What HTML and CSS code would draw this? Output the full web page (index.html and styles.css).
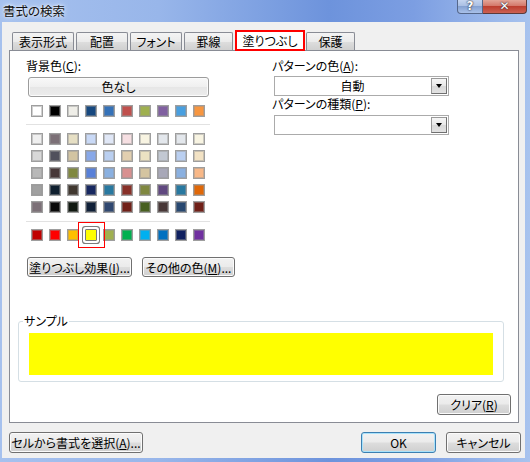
FILE: index.html
```html
<!DOCTYPE html>
<html lang="ja">
<head>
<meta charset="utf-8">
<title>書式の検索</title>
<link rel="stylesheet" href="styles.css">
</head>
<body>
<div class="window">
  <div class="titlebar">
    <span class="title">書式の検索</span>
    <div class="caption-btns">
      <span class="cap help">?</span>
      <span class="cap close">✕</span>
    </div>
  </div>
  <div class="client">
    <div class="tabs">
      <div class="tab t1">表示形式</div>
      <div class="tab t2">配置</div>
      <div class="tab t3">フォント</div>
      <div class="tab t4">罫線</div>
      <div class="tab active">塗りつぶし</div>
      <div class="tab t6">保護</div>
    </div>
    <div class="panel">
      <div class="cols">
        <div class="left">
          <div class="label">背景色(<u>C</u>):</div>
          <button class="btn none-btn">色なし</button>
          <div class="swatches row1">
            <span class="sw" style="background:#ffffff"></span>
            <span class="sw" style="background:#000000"></span>
            <span class="sw" style="background:#efeee8"></span>
            <span class="sw" style="background:#17487f"></span>
            <span class="sw" style="background:#3572b8"></span>
            <span class="sw" style="background:#c0504d"></span>
            <span class="sw" style="background:#9fb04f"></span>
            <span class="sw" style="background:#8060a0"></span>
            <span class="sw" style="background:#489fe0"></span>
            <span class="sw" style="background:#f79640"></span>
          </div>
          <div class="sep"></div>
          <div class="swatches grid5">
            <span class="sw" style="background:#efefef"></span>
            <span class="sw" style="background:#7c7077"></span>
            <span class="sw" style="background:#e6dfc4"></span>
            <span class="sw" style="background:#c9d9f6"></span>
            <span class="sw" style="background:#e0e7f6"></span>
            <span class="sw" style="background:#f6dfe2"></span>
            <span class="sw" style="background:#f8f4e2"></span>
            <span class="sw" style="background:#e3e7ec"></span>
            <span class="sw" style="background:#e3e7ec"></span>
            <span class="sw" style="background:#f8f4e2"></span>

            <span class="sw" style="background:#d8d8d8"></span>
            <span class="sw" style="background:#50505c"></span>
            <span class="sw" style="background:#d2c4a2"></span>
            <span class="sw" style="background:#88a8e8"></span>
            <span class="sw" style="background:#bacff0"></span>
            <span class="sw" style="background:#e2cfb0"></span>
            <span class="sw" style="background:#ebe2c2"></span>
            <span class="sw" style="background:#c2c8d2"></span>
            <span class="sw" style="background:#bacff0"></span>
            <span class="sw" style="background:#f2e2c4"></span>

            <span class="sw" style="background:#b8b8b8"></span>
            <span class="sw" style="background:#483838"></span>
            <span class="sw" style="background:#808840"></span>
            <span class="sw" style="background:#5880d8"></span>
            <span class="sw" style="background:#8ab0e0"></span>
            <span class="sw" style="background:#d89090"></span>
            <span class="sw" style="background:#d4c4a0"></span>
            <span class="sw" style="background:#a8a8b8"></span>
            <span class="sw" style="background:#8ab0e0"></span>
            <span class="sw" style="background:#f8b888"></span>

            <span class="sw" style="background:#a0a0a0"></span>
            <span class="sw" style="background:#102030"></span>
            <span class="sw" style="background:#403830"></span>
            <span class="sw" style="background:#182860"></span>
            <span class="sw" style="background:#2878a0"></span>
            <span class="sw" style="background:#883028"></span>
            <span class="sw" style="background:#808840"></span>
            <span class="sw" style="background:#604880"></span>
            <span class="sw" style="background:#2878a0"></span>
            <span class="sw" style="background:#e06808"></span>

            <span class="sw" style="background:#7c7077"></span>
            <span class="sw" style="background:#0a0a0a"></span>
            <span class="sw" style="background:#101810"></span>
            <span class="sw" style="background:#102038"></span>
            <span class="sw" style="background:#304870"></span>
            <span class="sw" style="background:#702018"></span>
            <span class="sw" style="background:#486020"></span>
            <span class="sw" style="background:#483838"></span>
            <span class="sw" style="background:#284870"></span>
            <span class="sw" style="background:#702018"></span>
          </div>
          <div class="sep"></div>
          <div class="swatches rowstd">
            <span class="sw" style="background:#c00000"></span>
            <span class="sw" style="background:#ff0000"></span>
            <span class="sw" style="background:#ffc000"></span>
            <span class="sw sel" style="background:#ffff00"></span>
            <span class="sw" style="background:#a0b050"></span>
            <span class="sw" style="background:#00b050"></span>
            <span class="sw" style="background:#00b0f0"></span>
            <span class="sw" style="background:#0070c0"></span>
            <span class="sw" style="background:#102060"></span>
            <span class="sw" style="background:#7030a0"></span>
          </div>
          <div class="btn-row">
            <button class="btn fx">塗りつぶし効果(<u>I</u>)...</button>
            <button class="btn more">その他の色(<u>M</u>)...</button>
          </div>
        </div>
        <div class="right">
          <div class="label">パターンの色(<u>A</u>):</div>
          <div class="combo"><span class="combo-text">自動</span><span class="combo-arrow"></span></div>
          <div class="label label2">パターンの種類(<u>P</u>):</div>
          <div class="combo combo2"><span class="combo-text"></span><span class="combo-arrow"></span></div>
        </div>
      </div>
      <fieldset class="sample">
        <legend>サンプル</legend>
        <div class="sample-fill"></div>
      </fieldset>
      <div class="clear-row"><button class="btn clear">クリア(<u>R</u>)</button></div>
    </div>
    <div class="footer">
      <button class="btn pick">セルから書式を選択(<u>A</u>)...</button>
      <div class="spacer"></div>
      <button class="btn ok">OK</button>
      <button class="btn cancel">キャンセル</button>
    </div>
  </div>
</div>
</body>
</html>
```

FILE: styles.css
```css
* { box-sizing: border-box; }
html, body { margin: 0; padding: 0; }
body {
  width: 530px;
  height: 462px;
  overflow: hidden;
  font-family: "Noto Sans CJK JP", "Noto Sans", sans-serif;
  font-size: 12px;
  font-feature-settings: "palt";
  color: #000;
}
u { text-decoration: underline; text-underline-offset: 1px; }

.window {
  width: 530px;
  height: 462px;
  display: flex;
  flex-direction: column;
  background: linear-gradient(to right, #a6c1ee 0%, #98b6ea 30%, #6d93dc 62%, #7c9ee2 78%, #a8c3ee 100%);
}

.titlebar {
  height: 22px;
  flex: none;
  display: flex;
  justify-content: space-between;
  align-items: flex-start;
  padding-left: 3px;
}
.title {
  margin-top: 3px;
  line-height: 15px;
  font-size: 12.5px;
  color: #111;
  text-shadow: 0 0 3px #fff, 0 0 6px #e8f0ff;
}
.caption-btns {
  display: flex;
  margin-right: 3px;
}
.cap {
  height: 14px;
  color: #fff;
  font-weight: bold;
  text-align: center;
  line-height: 13px;
  font-family: "DejaVu Sans", sans-serif;
  text-shadow: 0 0 2px #334, 0 0 1px #223;
}
.help {
  width: 26px;
  font-size: 12px;
  border: 1px solid #55678a;
  border-top: none;
  border-radius: 0 0 0 4px;
  background: linear-gradient(#c4d4ef, #a7bde2 50%, #86a2d2 50%, #a9c1e9);
}
.close {
  width: 44px;
  font-size: 12px;
  border: 1px solid #5c3a3a;
  border-top: none;
  border-left: none;
  border-radius: 0 0 4px 0;
  background: linear-gradient(#e3a598, #d27365 50%, #bd3f30 50%, #cd6152);
}

.client {
  flex: 1;
  margin: 0 5px 4px 2px;
  background: #f0f0f0;
  display: flex;
  flex-direction: column;
}

/* tabs */
.tabs {
  display: flex;
  align-items: flex-start;
  height: 21px;
  margin-top: 8px;
  margin-bottom: -1px;
  padding-left: 10px;
  position: relative;
  z-index: 1;
}
.tab {
  height: 18px;
  margin-top: 2px;
  margin-right: 2px;
  border: 1px solid #898c95;
  border-bottom: none;
  border-radius: 2px 2px 0 0;
  background: linear-gradient(#f4f4f4, #ebebeb 50%, #dedede 50%, #d0d0d0);
  text-align: center;
  line-height: 17px;
  white-space: nowrap;
}
.t1 { width: 62px; }
.t2 { width: 52px; }
.t3 { width: 52px; }
.t4 { width: 49px; }
.t6 { width: 49px; }
.tab.active {
  width: 70px;
  height: 21px;
  margin-top: 0;
  margin-right: 1px;
  border: 2px solid #f00;
  border-radius: 0;
  background: #fff;
  line-height: 17px;
}

/* panel */
.panel {
  height: 373px;
  margin: 0 6px 0 7px;
  border: 1px solid #898c95;
  background: #fff;
  padding: 8px 7px 0 8px;
  display: flex;
  flex-direction: column;
}
.cols {
  display: grid;
  grid-template-columns: 184px 176px;
  column-gap: 62px;
  padding-left: 8px;
}
.label {
  line-height: 14px;
  height: 14px;
  white-space: nowrap;
}

.btn {
  font-family: inherit;
  font-size: 12px;
  font-weight: normal;
  font-feature-settings: "palt";
  color: #000;
  height: 21px;
  padding: 0;
  border: 1px solid #707070;
  border-radius: 3px;
  background: linear-gradient(#f2f2f2, #ebebeb 48%, #dddddd 52%, #cfcfcf);
  box-shadow: inset 0 0 0 1px #fbfbfb;
  line-height: 18px;
  white-space: nowrap;
  flex: none;
}
.none-btn {
  display: block;
  width: 181px;
  height: 20px;
  margin: 4px 0 0 2px;
  border-color: #9c9c9c;
  background: linear-gradient(#f8f8f8, #efefef 50%, #e6e6e6 50%, #ececec);
}

.swatches {
  display: grid;
  grid-template-columns: repeat(10, 12px);
  column-gap: 6px;
  row-gap: 5px;
  padding-left: 5px;
}
.sw {
  display: block;
  width: 12px;
  height: 12px;
  border: 1px solid #9e9e9e;
  box-shadow: inset 0 0 0 1px rgba(150, 150, 150, 0.45);
}
.row1 { margin-top: 8px; }
.sep {
  height: 1px;
  width: 184px;
  background: #e2e2e2;
}
.row1 + .sep { margin-top: 7px; }
.grid5 { margin-top: 8px; }
.grid5 + .sep { margin-top: 8px; }
.rowstd { margin-top: 7px; }
.sw.sel {
  position: relative;
  border-color: #7a7a7a;
  border-radius: 1px;
  box-shadow: 0 0 0 2px #fff, 0 0 0 3px #7c7c7c;
}
.sw.sel::after {
  content: "";
  position: absolute;
  top: -8px;
  left: -8px;
  right: -9px;
  bottom: -8px;
  border: 1px solid #f00;
}

.btn-row {
  display: flex;
  gap: 10px;
  margin-top: 16px;
  margin-left: 1px;
  width: max-content;
}
.btn-row .btn { height: 20px; line-height: 17px; }
.fx { width: 105px; }
.more { width: 93px; }

.combo {
  display: flex;
  width: 175px;
  height: 20px;
  margin: 3px 0 0 2px;
  border: 1px solid #ababab;
  background: #fff;
}
.label2 { margin-top: 1px; }
.combo2 { margin-top: 4px; }
.combo-text {
  flex: 1;
  text-align: center;
  line-height: 18px;
}
.combo-arrow {
  width: 16px;
  margin: 1px;
  border: 1px solid #9a9a9a;
  border-right-color: #707070;
  border-bottom-color: #707070;
  background: linear-gradient(#f6f6f6, #e8e8e8 50%, #d8d8d8 50%, #e2e2e2);
  display: flex;
  align-items: center;
  justify-content: center;
}
.combo-arrow::before {
  content: "";
  border-left: 3px solid transparent;
  border-right: 3px solid transparent;
  border-top: 4px solid #000;
}

/* sample */
.sample {
  margin: 37px 7px 0 0;
  padding: 5px 10px 6px 10px;
  border: 1px solid #d5dfe5;
  border-radius: 3px;
  min-width: 0;
}
.sample legend {
  padding: 0 1px;
  margin-left: -6px;
  line-height: 14px;
  font-size: 12px;
}
.sample-fill {
  height: 42px;
  background: #ffff00;
}
.clear-row {
  display: flex;
  justify-content: flex-end;
  margin-top: 12px;
}
.clear { width: 74px; }

/* footer */
.footer {
  display: flex;
  margin: 9px 4px 0 7px;
}
.spacer { flex: 1; }
.pick { width: 134px; }
.ok {
  width: 75px;
  margin-right: 10px;
  border-color: #3c7fb1;
  box-shadow: inset 0 0 0 1px #a8e2fb;
}
.cancel { width: 75px; }
```
